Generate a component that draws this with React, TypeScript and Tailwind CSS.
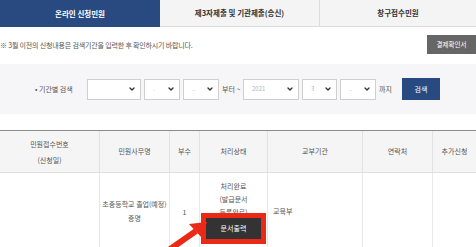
import { ChevronDown } from 'lucide-react'

const FONT = { fontFamily: '"Noto Sans CJK KR", "Noto Sans", sans-serif' }

function Select({ w, value }: { w: string; value?: string }) {
  return (
    <div className={`${w} h-[21px] bg-white border border-[#cfcfcf] flex items-center justify-between pl-[8px] pr-[4px]`}>
      <span className="text-[6px] text-[#b5b5b5] leading-none">{value}</span>
      <ChevronDown className="w-[8px] h-[8px] text-[#333]" strokeWidth={4} />
    </div>
  )
}

const COLS = 'grid grid-cols-[100px_70px_30px_68px_95px_70px_43px]'

export default function App() {
  return (
    <div className="relative w-[476px] h-[247px] overflow-hidden bg-white text-[#555]" style={FONT}>
      {/* tabs */}
      <div className="flex h-[27px] text-[7.5px] font-bold">
        <div className="w-[160px] bg-[#284a80] text-white flex items-center justify-center">온라인 신청민원</div>
        <div className="w-[159px] bg-[#f4f4f4] border-b border-[#dcdcdc] text-[#333] flex items-center justify-center">제3자제출 및 기관제출(송신)</div>
        <div className="flex-1 bg-[#f4f4f4] border-b border-l border-[#dcdcdc] text-[#333] flex items-center justify-center">창구접수민원</div>
      </div>

      {/* notice */}
      <div className="h-[37px] flex items-center justify-between">
        <p className="text-[7px] text-[#555] tracking-tight">※ 3월 이전의 신청내용은 검색기간을 입력한 후 확인하시기 바랍니다.</p>
        <div className="w-[49px] h-[19px] bg-[#666] text-white text-[6.5px] flex items-center justify-center -mt-[2px]">결제확인서</div>
      </div>

      {/* search */}
      <div className="h-[50px] bg-[#f6f6f8] flex items-center pl-[35px]">
        <span className="text-[7px] text-[#555] w-[52px]">• 기간별 검색</span>
        <div className="flex items-center gap-[3px]">
          <Select w="w-[54px]" />
          <Select w="w-[36px]" value="." />
          <Select w="w-[36px]" value=".." />
        </div>
        <span className="text-[7px] ml-[3px] w-[21px]">부터 ~</span>
        <div className="flex items-center gap-[3px]">
          <Select w="w-[56px]" value="2021" />
          <Select w="w-[35px]" value="3" />
          <Select w="w-[36px]" value=".." />
        </div>
        <span className="text-[7px] ml-[3px]">까지</span>
        <div className="ml-[10px] w-[38px] h-[22px] bg-[#284a80] text-white text-[7px] flex items-center justify-center">검색</div>
      </div>

      {/* table */}
      <div className="mt-[16px] border-t border-[#8a8a8a] text-[7px] text-[#555]">
        <div className={`${COLS} h-[42px] bg-[#f5f5f5] border-b border-[#e0e0e0]`}>
          <div className="flex items-center justify-center text-center leading-[16px] border-r border-[#e2e2e2]">민원접수번호<br />(신청일)</div>
          <div className="flex items-center justify-center border-r border-[#e2e2e2]">민원사무명</div>
          <div className="flex items-center justify-center border-r border-[#e2e2e2]">부수</div>
          <div className="flex items-center justify-center border-r border-[#e2e2e2]">처리상태</div>
          <div className="flex items-center justify-center border-r border-[#e2e2e2]">교부기관</div>
          <div className="flex items-center justify-center border-r border-[#e2e2e2]">연락처</div>
          <div className="flex items-center justify-center">추가신청</div>
        </div>
        <div className={`${COLS} h-[80px]`}>
          <div className="border-r border-[#e8e8e8]" />
          <div className="flex items-start justify-center text-center leading-[14px] pt-[24px] border-r border-[#e8e8e8] whitespace-nowrap">초중등학교 졸업(예정)<br />증명</div>
          <div className="flex items-start justify-center pt-[34px] border-r border-[#e8e8e8]">1</div>
          <div className="flex flex-col items-center pt-[7px] border-r border-[#e8e8e8]">
            <div className="text-center leading-[13px]">처리완료<br />(발급문서<br />등록완료)</div>
            <div className="-mt-[6px] w-[65px] border-[5px] border-[#ea2a17] bg-white">
              <div className="h-[21px] bg-[#333] text-white text-[7px] flex items-center justify-center">문서출력</div>
            </div>
          </div>
          <div className="pl-[5px] pt-[33px] border-r border-[#e8e8e8]">교육부</div>
          <div className="border-r border-[#e8e8e8]" />
          <div />
        </div>
      </div>

      {/* annotation arrow */}
      <svg className="absolute inset-0 pointer-events-none" width="476" height="247" viewBox="0 0 476 247">
        <line x1="166" y1="252" x2="196" y2="231" stroke="#ea2a17" strokeWidth="6" />
        <polygon points="207,222 202,238 189,224" fill="#ea2a17" />
      </svg>
    </div>
  )
}
